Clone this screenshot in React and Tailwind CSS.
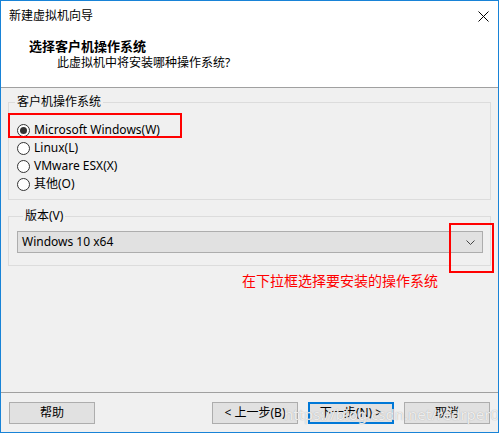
import React from 'react';

const font = { fontFamily: '"Noto Sans", "Noto Sans CJK SC", sans-serif' };

const options = ['Microsoft Windows(W)', 'Linux(L)', 'VMware ESX(X)', '其他(O)'];

const Radio = ({ checked, label }) => (
    <div className="flex items-center h-[18px]">
        <span className="w-[13px] h-[13px] rounded-full border border-[#333] bg-white flex items-center justify-center ml-[8px]">
            {checked && <span className="w-[7px] h-[7px] rounded-full bg-[#333]" />}
        </span>
        <span className="ml-[4px] text-[12px] leading-[18px] text-black">{label}</span>
    </div>
);

const Button = ({ children, primary }) => (
    <button
        className={
            primary
                ? 'w-[86px] h-[22px] bg-[#e1e1e1] border-2 border-[#0078d7] text-[12px] text-black flex items-center justify-center'
                : 'w-[86px] h-[22px] bg-[#e1e1e1] border border-[#adadad] text-[12px] text-black flex items-center justify-center'
        }
    >
        {children}
    </button>
);

export default function App() {
    return (
        <div style={font} className="relative w-[499px] h-[433px] border border-[#1883d7] bg-[#f0f0f0] flex flex-col overflow-hidden">
            {/* header */}
            <div className="bg-white h-[87px] border-b border-[#a0a0a0] flex flex-col">
                <div className="h-[30px] flex items-center justify-between pl-[8px] pr-[9px]">
                    <span className="text-[12px] text-black">新建虚拟机向导</span>
                    <svg width="11" height="11" viewBox="0 0 11 11">
                        <path d="M0.5 0.5 L10.5 10.5 M10.5 0.5 L0.5 10.5" stroke="#000" strokeWidth="1" />
                    </svg>
                </div>
                <div className="mt-[7px] pl-[28px] text-[13px] leading-[16px] font-bold text-black">选择客户机操作系统</div>
                <div className="pl-[56px] text-[12px] leading-[17px] text-black">此虚拟机中将安装哪种操作系统?</div>
            </div>

            {/* guest os group */}
            <fieldset className="mx-[7px] mt-[6px] border border-[#dcdcdc] pb-[6px]">
                <legend className="ml-[6px] px-[2px] text-[12px] leading-[16px] text-black">客户机操作系统</legend>
                <div className="pt-[11px] flex flex-col">
                    {options.map((o, i) => (
                        <Radio key={o} label={o} checked={i === 0} />
                    ))}
                </div>
            </fieldset>

            {/* version group */}
            <fieldset className="mx-[7px] mt-[8px] border border-[#dcdcdc] pl-[8px] pr-[7px] pb-[12px]">
                <legend className="ml-[6px] px-[2px] text-[12px] leading-[16px] text-black">版本(V)</legend>
                <div className="mt-[7px] h-[22px] bg-[#e1e1e1] border border-[#adadad] flex items-center justify-between pl-[4px] pr-[7px]">
                    <span className="text-[12px] text-black">Windows 10 x64</span>
                    <svg width="9" height="5" viewBox="0 0 9 5">
                        <path d="M0.5 0.5 L4.5 4.5 L8.5 0.5" fill="none" stroke="#444" strokeWidth="1" />
                    </svg>
                </div>
            </fieldset>

            <div className="ml-[241px] mt-[5px] text-[14px] leading-[20px] text-[#ff0000]">在下拉框选择要安装的操作系统</div>

            {/* footer */}
            <div className="mt-auto h-[40px] border-t border-[#a0a0a0] flex items-start pt-[9px] pl-[8px] pr-[8px]">
                <Button>帮助</Button>
                <div className="ml-auto flex gap-[10px]">
                    <Button>&lt; 上一步(B)</Button>
                    <Button primary>下一步(N) &gt;</Button>
                    <Button>取消</Button>
                </div>
            </div>

            {/* annotations */}
            <div className="absolute left-[7px] top-[112px] w-[174px] h-[25px] border-2 border-[#ff0000]" />
            <div className="absolute left-[448px] top-[222px] w-[45px] h-[50px] border-2 border-[#ff0000]" />
            <span
                className="absolute left-[283px] top-[402px] text-[15px] text-white/80 pointer-events-none"
                style={{ textShadow: '0 0 1px #999' }}
            >
                https://blog.csdn.net/redrper0
            </span>
        </div>
    );
}
